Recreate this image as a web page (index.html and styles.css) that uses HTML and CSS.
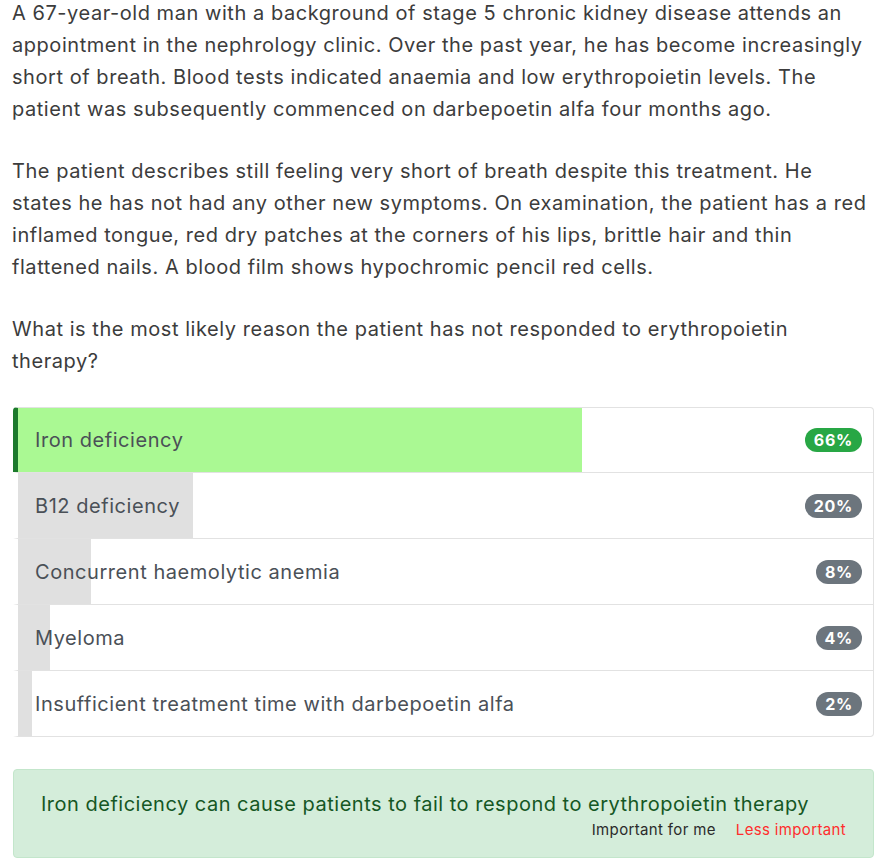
FILE: index.html
```html
<!DOCTYPE html>
<html>
<head>
<meta charset="utf-8">
<link rel="stylesheet" href="styles.css">
</head>
<body>
<div class="page">
  <p class="stem">A 67-year-old man with a background of stage 5 chronic kidney disease attends an appointment in the nephrology clinic. Over the past year, he has become increasingly short of breath. Blood tests indicated anaemia and low erythropoietin levels. The patient was subsequently commenced on darbepoetin alfa four months ago.</p>
  <p class="stem">The patient describes still feeling very short of breath despite this treatment. He states he has not had any other new symptoms. On examination, the patient has a red inflamed tongue, red dry patches at the corners of his lips, brittle hair and thin flattened nails. A blood film shows hypochromic pencil red cells.</p>
  <p class="stem">What is the most likely reason the patient has not responded to erythropoietin therapy?</p>

  <ul class="answers">
    <li class="answer correct" style="--p:66%"><span class="label">Iron deficiency</span><span class="badge badge-success">66%</span></li>
    <li class="answer" style="--p:20.5%"><span class="label">B12 deficiency</span><span class="badge">20%</span></li>
    <li class="answer" style="--p:8.5%"><span class="label">Concurrent haemolytic anemia</span><span class="badge">8%</span></li>
    <li class="answer" style="--p:3.7%"><span class="label">Myeloma</span><span class="badge">4%</span></li>
    <li class="answer" style="--p:1.6%"><span class="label">Insufficient treatment time with darbepoetin alfa</span><span class="badge">2%</span></li>
  </ul>

  <div class="explain">
    <div class="explain-text">Iron deficiency can cause patients to fail to respond to erythropoietin therapy</div>
    <div class="explain-actions">
      <span class="act">Important for me</span>
      <span class="act less">Less important</span>
    </div>
  </div>
</div>
</body>
</html>
```

FILE: styles.css
```css
html, body {
  margin: 0;
  padding: 0;
  background: #fff;
}
body {
  font-family: Inter, "Noto Sans", "Liberation Sans", sans-serif;
  color: #3c3c3c;
  letter-spacing: 0.55px;
}
.page {
  padding: 0 10px 0 12px;
  margin-top: -3px;
}
.stem {
  margin: 0 0 30px 0;
  font-size: 20px;
  line-height: 32px;
}
.answers {
  list-style: none;
  margin: 0 0 32px 1px;
  padding: 0;
}
.answer {
  display: flex;
  align-items: center;
  justify-content: space-between;
  height: 65px;
  box-sizing: border-box;
  padding: 0 11px 0 17px;
  border-top: 1px solid #e2e2e2;
  border-right: 1px solid #e2e2e2;
  border-left: 5px solid transparent;
  background-image: linear-gradient(to right, #e0e0e0 var(--p), #fff var(--p));
  background-origin: padding-box;
  background-clip: padding-box;
  color: #4a5057;
  font-size: 20px;
}
.answer + .answer {
  height: 66px;
}
.answer:last-child {
  border-bottom: 1px solid #e2e2e2;
  border-bottom-right-radius: 4px;
  height: 67px;
}
.answer.correct {
  border-left-color: #1c7a2c;
  border-top-left-radius: 4px;
  border-top-right-radius: 4px;
  background-image: linear-gradient(to right, #aaf993 var(--p), #fff var(--p));
}
.badge {
  display: inline-block;
  background: #6c757d;
  color: #fff;
  font-weight: 700;
  font-size: 16px;
  line-height: 16px;
  letter-spacing: 0.7px;
  padding: 4px 9px;
  border-radius: 12px;
}
.badge-success {
  background: #28a745;
}
.explain {
  margin-left: 1px;
  background: #d4edda;
  border: 1px solid #c3e6cb;
  border-radius: 4px;
  padding: 22px 27px 17px 27px;
  color: #155724;
}
.explain-text {
  font-size: 20px;
  line-height: 24px;
  letter-spacing: 0.5px;
}
.explain-actions {
  display: flex;
  justify-content: flex-end;
  gap: 20px;
  margin-top: 4px;
  font-size: 15px;
  line-height: 20px;
  letter-spacing: 0.35px;
}
.act {
  color: #2b2b2b;
}
.act.less {
  color: #ff2d2d;
}
```
